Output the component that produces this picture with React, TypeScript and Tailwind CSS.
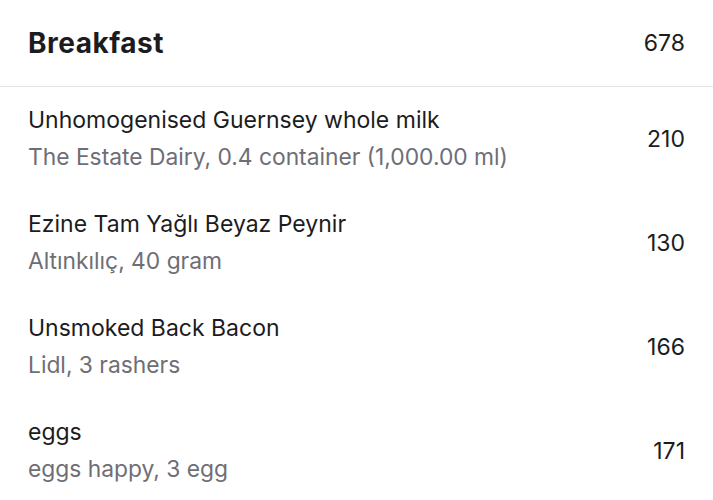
import React from "react";

interface FoodItem {
  name: string;
  detail: string;
  kcal: number;
}

const items: FoodItem[] = [
  {
    name: "Unhomogenised Guernsey whole milk",
    detail: "The Estate Dairy, 0.4 container (1,000.00 ml)",
    kcal: 210,
  },
  { name: "Ezine Tam Yağlı Beyaz Peynir", detail: "Altınkılıç, 40 gram", kcal: 130 },
  { name: "Unsmoked Back Bacon", detail: "Lidl, 3 rashers", kcal: 166 },
  { name: "eggs", detail: "eggs happy, 3 egg", kcal: 171 },
];

const App: React.FC = () => {
  return (
    <div
      className="w-[713px] h-[500px] bg-white overflow-hidden text-[#1c1c1e]"
      style={{ fontFamily: "Inter, 'Noto Sans', sans-serif" }}
    >
      {/* Meal header */}
      <div className="h-[87px] px-[28px] flex items-center justify-between border-b border-[#e4e4e8]">
        <h2 className="text-[28px] font-bold tracking-[0.5px]">Breakfast</h2>
        <span className="text-[23px]">678</span>
      </div>

      {/* Food rows */}
      {items.map((item) => (
        <div key={item.name} className="h-[104px] px-[28px] flex items-center justify-between">
          <div className="flex flex-col gap-[7px] -mt-[2px]">
            <span className="text-[23px] leading-[30px]">{item.name}</span>
            <span className="text-[22.8px] leading-[30px] text-[#6e6e76]">{item.detail}</span>
          </div>
          <span className="text-[23px]">{item.kcal}</span>
        </div>
      ))}
    </div>
  );
};

export default App;
